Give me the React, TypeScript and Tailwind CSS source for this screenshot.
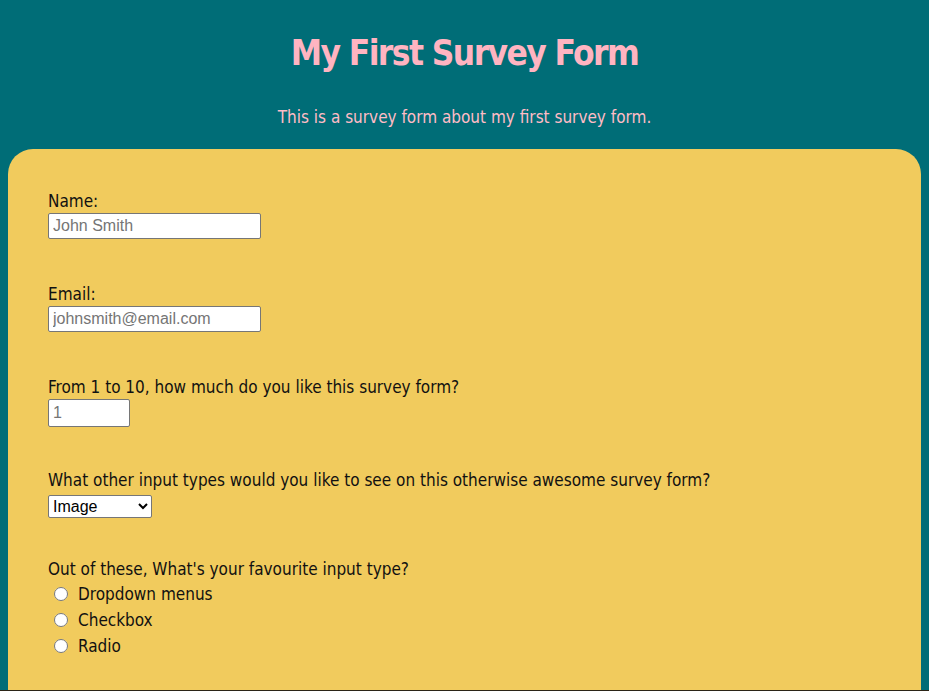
export default function App() {
  const f = { fontFamily: '"DejaVu Sans Condensed", "DejaVu Sans", sans-serif' };
  const arial = { fontFamily: 'Arial, "Liberation Sans", sans-serif' };
  return (
    <div className="bg-[#006d77]" style={f}>
      <div className="px-2">
        <header className="flex flex-col items-center pt-[29px]">
          <h1 className="text-[35px] font-bold leading-[48px] text-[#ffb4c1] tracking-[-1.6px]">My First Survey Form</h1>
          <p className="mt-[28px] text-[17px] leading-[24px] text-[#ffbcc6]">This is a survey form about my first survey form.</p>
        </header>
        <form className="mt-[20px] h-[541px] rounded-t-[25px] bg-[#f1cb5d] px-10 pt-[40px] text-[17px] leading-[24px] text-[#111]">
          <div className="flex flex-col items-start">
            <label>Name:</label>
            <input type="text" placeholder="John Smith" className="h-[26px] w-[213px] rounded-[2px] border border-[#767676] bg-white px-[4px] text-[16px] placeholder:text-[#757575]" style={arial} />
          </div>
          <div className="mt-[43px] flex flex-col items-start">
            <label>Email:</label>
            <input type="email" placeholder="johnsmith@email.com" className="h-[26px] w-[213px] rounded-[2px] border border-[#767676] bg-white px-[4px] text-[16px] placeholder:text-[#757575]" style={arial} />
          </div>
          <div className="mt-[43px] flex flex-col items-start">
            <label>From 1 to 10, how much do you like this survey form?</label>
            <input type="number" placeholder="1" className="h-[28px] w-[82px] rounded-[2px] border border-[#767676] bg-white px-[4px] text-[16px] placeholder:text-[#757575]" style={arial} />
          </div>
          <div className="mt-[41px] flex flex-col items-start">
            <label>What other input types would you like to see on this otherwise awesome survey form?</label>
            <select defaultValue="Image" className="mt-[3px] h-[23px] w-[104px] rounded-[2px] border border-[#767676] bg-white text-[16px] text-black" style={arial}>
              <option>Image</option>
              <option>Color</option>
              <option>Date</option>
            </select>
          </div>
          <div className="mt-[39px] flex flex-col items-start">
            <label>Out of these, What's your favourite input type?</label>
            {["Dropdown menus", "Checkbox", "Radio"].map((t) => (
              <label key={t} className="flex items-center leading-[26px]">
                <input type="radio" name="fav" className="ml-[6px] mr-[10px] h-[14px] w-[14px]" />
                {t}
              </label>
            ))}
          </div>
        </form>
      </div>
      <div className="h-[40px] bg-[#2b2417]" />
    </div>
  );
}
